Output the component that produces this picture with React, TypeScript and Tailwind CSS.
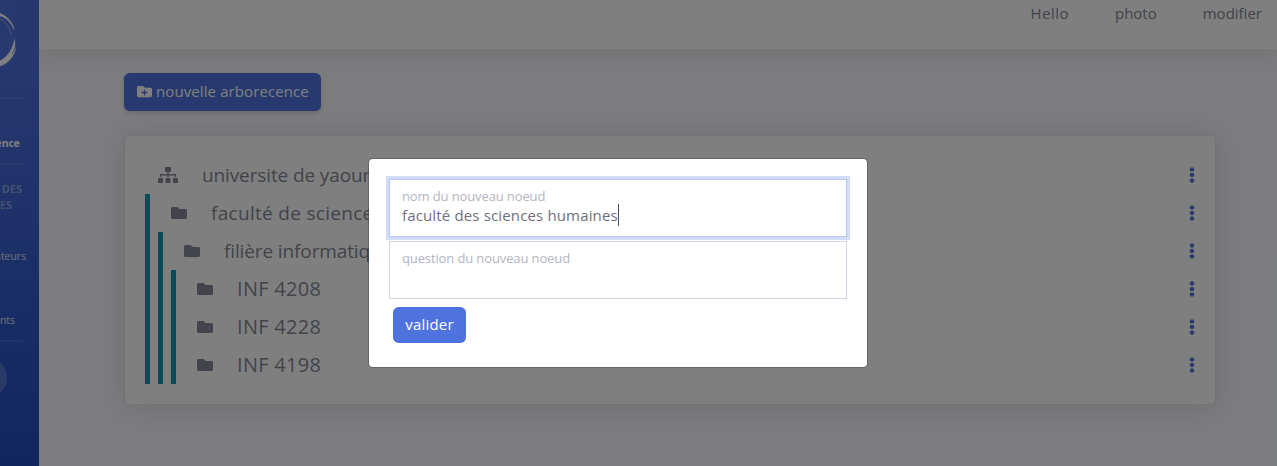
import { FaEllipsisV, FaFolder, FaFolderPlus, FaSitemap } from "react-icons/fa";

type TreeNode = { label: string; style: string; children?: TreeNode[] };

const faculty: TreeNode = {
  label: "faculté de sciences",
  style: "tracking-[0.3px]",
  children: [
    {
      label: "filière informatique",
      style: "tracking-[-0.12px]",
      children: [
        { label: "INF 4208", style: "text-[20px] tracking-[0.3px]" },
        { label: "INF 4228", style: "text-[20px] tracking-[0.3px]" },
        { label: "INF 4198", style: "text-[20px] tracking-[0.3px]" },
      ],
    },
  ],
};

function RowMenu() {
  return <FaEllipsisV className="-mr-[5px] ml-auto size-4 shrink-0 text-[#4e73df]" />;
}

function Branch({ node }: { node: TreeNode }) {
  return (
    <div>
      <div className="flex h-[38px] items-center pl-[21px]">
        <FaFolder className="mr-6 size-4 shrink-0" />
        <span className={`whitespace-nowrap ${node.style}`}>{node.label}</span>
        <RowMenu />
      </div>
      {node.children && (
        <div className="ml-2 border-l-[5px] border-[#1794ae]">
          {node.children.map((child) => (
            <Branch key={child.label} node={child} />
          ))}
        </div>
      )}
    </div>
  );
}

function Divider() {
  return <div className="mr-4 h-0.5 shrink-0 bg-white/10" />;
}

function Sidebar() {
  return (
    <aside className="flex h-[466px] w-[39px] shrink-0 flex-col overflow-hidden bg-linear-to-b from-[#4e73df] from-10% to-[#224abe] text-[10.4px] leading-4 whitespace-nowrap text-white/80">
      <div className="h-[97px] shrink-0">
        <svg width="39" height="80" viewBox="0 0 39 80" fill="none">
          <path d="M0 13.6 C6 15.5 12 21 14 29.5 C11 22 6 17.5 0 15.8Z" fill="#fff" stroke="#fff" strokeWidth="0.7" />
          <path d="M0 19 C5 21 9 26 11.5 35" stroke="#fff" strokeOpacity="0.5" strokeWidth="0.7" />
          <path d="M14.5 38.5 C15.5 43 15.5 46 14 50 L16.2 47 C15 56 8 64 0 66.3 L0 60.5 C7 57 12.5 50 14.5 38.5Z" fill="#fff" />
          <path d="M12.5 53.5 L15 48.5" stroke="#4e73df" strokeWidth="0.7" />
        </svg>
      </div>
      <Divider />
      <div className="flex h-16 w-5 shrink-0 items-end justify-end pb-3 font-bold text-white">ence</div>
      <Divider />
      <div className="flex h-12 w-[22px] shrink-0 flex-col items-end pt-4 font-bold text-white/40">
        <span className="text-[11px]">DES</span>
        <span className="mr-[10px] text-[11px]">ES</span>
      </div>
      <div className="mt-[35px] flex w-[26px] justify-end">ateurs</div>
      <div className="mt-12 flex w-[15px] justify-end">ants</div>
      <div className="h-3 shrink-0" />
      <Divider />
      <div className="mt-[16px] -ml-[33px] size-10 shrink-0 rounded-full bg-white/20" />
    </aside>
  );
}

function Field({ label, value, focused }: { label: string; value?: string; focused?: boolean }) {
  return (
    <label
      className={`flex h-[58px] flex-col border px-3 pt-1.5 ${
        focused ? "border-[#bac8f3] ring-3 ring-[#d1dcf7]" : "border-[#d1d3e2]"
      }`}
    >
      <span className="text-[13px] leading-5 tracking-[-0.12px] text-[#b3b4bf]">{label}</span>
      {value && (
        <span className="-mt-0.5 flex items-center text-[15px] leading-[21px] font-medium tracking-[0.15px] text-[#6e707e]">
          {value}
          <i className="h-[22px] w-px bg-[#4b4d5c]" />
        </span>
      )}
    </label>
  );
}

export default function App() {
  return (
    <div className="relative flex h-[466px] w-full overflow-hidden bg-[#f8f9fc] font-['Open_Sans',sans-serif] text-[#858796]">
      <Sidebar />
      <div className="flex min-w-0 flex-1 flex-col">
        <header className="flex h-[49px] shrink-0 justify-end bg-white pr-[15px] text-[15px] leading-[27px] shadow-[0_2px_28px_0_rgba(58,59,69,0.15)]">
          <nav className="flex gap-[46px]">
            <span className="tracking-[0.45px]">Hello</span>
            <span>photo</span>
            <span>modifier</span>
          </nav>
        </header>
        <main className="flex flex-col items-start pt-6 pr-[61px] pl-[85px]">
          <button className="flex h-[38px] w-[197px] items-center rounded-[5.6px] bg-[#4e73df] pb-0.5 pl-[13px] text-[15px] tracking-[0.1px] whitespace-nowrap text-white shadow-[0_2px_4px_rgba(58,59,69,0.2)]">
            <FaFolderPlus className="mr-1 size-[15px] shrink-0" />
            <span>nouvelle arborecence</span>
          </button>
          <section className="mt-6 w-full rounded-[5.6px] border border-[#e3e6f0] bg-white p-5 text-[19px] leading-6 shadow-[0_2px_28px_0_rgba(58,59,69,0.15)]">
            <div className="flex h-[38px] items-center pl-[13px]">
              <FaSitemap className="mr-6 h-4 w-5 shrink-0" />
              <span className="whitespace-nowrap tracking-[-0.12px]">universite de yaounde</span>
              <RowMenu />
            </div>
            <div className="border-l-[5px] border-[#1794ae]">
              <Branch node={faculty} />
            </div>
          </section>
        </main>
      </div>
      <div className="absolute inset-0 bg-black/50 pt-[158px] pl-[368px]">
        <div
          role="dialog"
          className="flex h-[210px] w-[500px] flex-col rounded-[4.8px] border border-black/20 bg-white bg-clip-padding px-5 pt-5"
        >
          <Field label="nom du nouveau noeud" value="faculté des sciences humaines" focused />
          <div className="h-1 shrink-0" />
          <Field label="question du nouveau noeud" />
          <button className="mt-2 ml-1 h-9 w-[73px] rounded-[5.6px] bg-[#4e73df] pb-0.5 text-[15px] tracking-[0.2px] text-white">
            valider
          </button>
        </div>
      </div>
    </div>
  );
}
